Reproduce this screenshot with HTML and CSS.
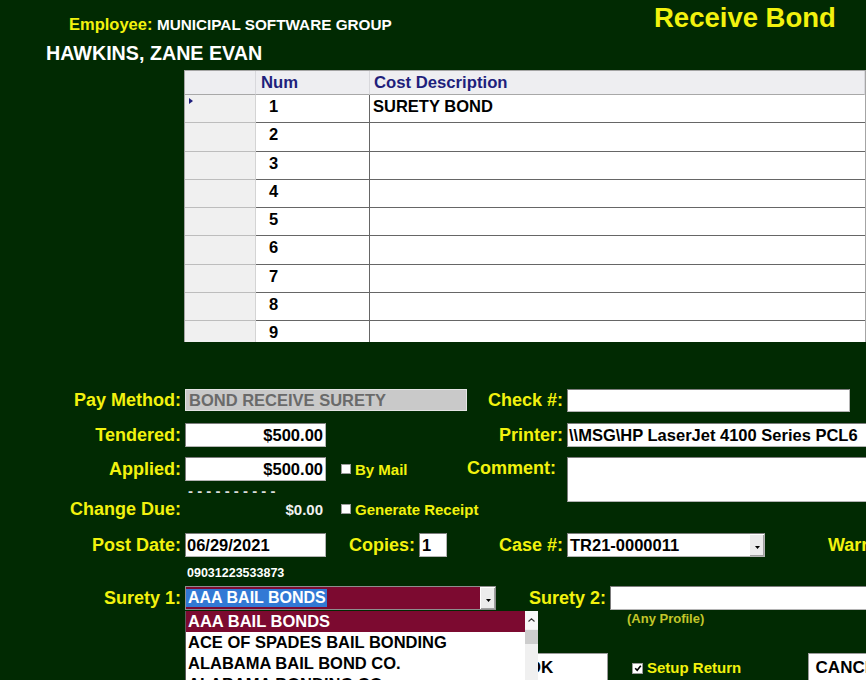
FILE: index.html
```html
<!DOCTYPE html>
<html>
<head>
<meta charset="utf-8">
<title>Receive Bond</title>
<link rel="stylesheet" href="styles.css">
</head>
<body>
<div class="screen">
  <header class="top">
    <div class="who">
      <div class="emp"><span class="emp-label">Employee:</span> <span class="emp-name">MUNICIPAL SOFTWARE GROUP</span></div>
      <div class="person">HAWKINS, ZANE EVAN</div>
    </div>
    <h1 class="title">Receive Bond</h1>
  </header>

  <div class="costs">
    <div class="hd sel"></div>
    <div class="hd num">Num</div>
    <div class="hd desc">Cost Description</div>

    <div class="sel"><span class="cur"></span></div><div class="num">1</div><div class="desc">SURETY BOND</div>
    <div class="sel"></div><div class="num">2</div><div class="desc"></div>
    <div class="sel"></div><div class="num">3</div><div class="desc"></div>
    <div class="sel"></div><div class="num">4</div><div class="desc"></div>
    <div class="sel"></div><div class="num">5</div><div class="desc"></div>
    <div class="sel"></div><div class="num">6</div><div class="desc"></div>
    <div class="sel"></div><div class="num">7</div><div class="desc"></div>
    <div class="sel"></div><div class="num">8</div><div class="desc"></div>
    <div class="sel"></div><div class="num">9</div><div class="desc"></div>
  </div>

  <div class="pay">
    <div class="row ra">
      <span class="lbl c1">Pay Method:</span>
      <div class="box method">BOND RECEIVE SURETY</div>
      <span class="lbl c4">Check #:</span>
      <div class="box checkno"></div>
    </div>

    <div class="row rb">
      <span class="lbl c1">Tendered:</span>
      <div class="box money">$500.00</div>
      <span class="spacer"></span>
      <span class="lbl c4">Printer:</span>
      <div class="box printer">\\MSG\HP LaserJet 4100 Series PCL6</div>
    </div>

    <div class="rc">
      <div class="rc-left">
        <div class="row applied">
          <span class="lbl c1">Applied:</span>
          <div class="box money">$500.00</div>
          <span class="opt"><span class="chk"></span>By Mail</span>
        </div>
        <div class="dashes">- - - - - - - - - -</div>
        <div class="row change">
          <span class="lbl c1">Change Due:</span>
          <span class="due">$0.00</span>
          <span class="opt"><span class="chk"></span>Generate Receipt</span>
        </div>
      </div>
      <div class="rc-right">
        <span class="lbl c4 top">Comment:</span>
        <div class="box comment"></div>
      </div>
    </div>

    <div class="row rd">
      <span class="lbl c1">Post Date:</span>
      <div class="box date">06/29/2021</div>
      <span class="lbl copies">Copies:</span>
      <div class="box copies-box">1</div>
      <span class="lbl case">Case #:</span>
      <div class="box combo-case">TR21-0000011<span class="drop"><svg width="5" height="3" viewBox="0 0 5 3"><path d="M0 0h5L2.5 3z" fill="#000"/></svg></span></div>
      <span class="lbl warrant">Warrant #:</span>
    </div>

    <div class="barcode">09031223533873</div>

    <div class="row re">
      <span class="lbl c1">Surety 1:</span>
      <div class="combo-surety">
        <span class="picked">AAA BAIL BONDS</span>
        <span class="drop"><svg width="5" height="3" viewBox="0 0 5 3"><path d="M0 0h5L2.5 3z" fill="#000"/></svg></span>
        <div class="list">
          <div class="items">
            <div class="item hi">AAA BAIL BONDS</div>
            <div class="item">ACE OF SPADES BAIL BONDING</div>
            <div class="item">ALABAMA BAIL BOND CO.</div>
            <div class="item">ALABAMA BONDING CO.</div>
          </div>
          <div class="scroll">
            <div class="up"><svg width="7" height="4" viewBox="0 0 7 4"><path d="M0.5 3.5L3.5 0.8L6.5 3.5" stroke="#333" stroke-width="1.1" fill="none"/></svg></div>
            <div class="thumb"></div>
          </div>
        </div>
      </div>
      <span class="lbl s2">Surety 2:</span>
      <div class="box surety2"></div>
    </div>

    <div class="profile">(Any Profile)</div>

    <div class="row rf">
      <button class="btn ok">OK</button>
      <span class="opt setup"><span class="chk on"><svg width="8" height="8" viewBox="0 0 8 8"><path d="M1.2 4.2L3.2 6.2L6.8 1.8" stroke="#000" stroke-width="1.6" fill="none"/></svg></span>Setup Return</span>
      <button class="btn cancel">CANCEL</button>
    </div>
  </div>
</div>
</body>
</html>
```

FILE: styles.css
```css
html, body {
  margin: 0;
  padding: 0;
}
body {
  background: #012a02;
  font-family: "Liberation Sans", Arial, sans-serif;
  font-weight: bold;
  width: 866px;
  height: 680px;
  overflow: hidden;
}
.screen {
  width: 866px;
  height: 680px;
  overflow: hidden;
  position: relative;
}

/* header */
.top {
  display: flex;
  height: 70px;
}
.who {
  width: 654px;
  flex: none;
  padding-top: 14px;
  box-sizing: border-box;
}
.emp {
  padding-left: 69px;
  height: 20px;
  line-height: 20px;
  white-space: nowrap;
}
.emp-label {
  color: #f2f20e;
  font-size: 16.5px;
}
.emp-name {
  color: #fff;
  font-size: 15.3px;
}
.person {
  padding-left: 46px;
  margin-top: 7px;
  color: #fff;
  font-size: 19.7px;
  line-height: 24px;
  white-space: nowrap;
}
.title {
  margin: 0;
  padding-top: 3px;
  font-size: 27.5px;
  line-height: 30px;
  color: #f2f20e;
  font-weight: bold;
  white-space: nowrap;
}

/* cost grid */
.costs {
  margin-left: 184px;
  width: 682px;
  height: 272px;
  box-sizing: border-box;
  border: 1px solid #a4a4a4;
  border-bottom: none;
  background: #fff;
  display: grid;
  grid-template-columns: 71px 114px 1fr;
  grid-template-rows: 24px repeat(9, 28.25px);
  overflow: hidden;
  font-size: 16.5px;
  color: #000;
}
.costs > div {
  box-sizing: border-box;
  white-space: nowrap;
}
.costs .sel {
  background: #f0f0f0;
  border-right: 1px solid #d4d4d4;
  border-bottom: 1px solid #bdbdbd;
  position: relative;
}
.costs .num {
  border-right: 1px solid #666;
  border-bottom: 1px solid #666;
  padding: 1px 0 0 13px;
  line-height: 20px;
}
.costs .desc {
  border-bottom: 1px solid #666;
  padding: 1px 0 0 3px;
  line-height: 20px;
}
.costs .hd {
  background: #eeeef1;
  border-right: 1px solid #d8d8dc;
  border-bottom: 1px solid #a8a8a8;
  color: #1f1f7c;
  line-height: 23px;
  padding: 0;
  font-size: 16.7px;
}
.costs .hd.num { padding-left: 5px; }
.costs .hd.desc { padding-left: 4px; }
.cur {
  position: absolute;
  left: 4px;
  top: 3px;
  width: 0;
  height: 0;
  border-left: 4px solid #1f1f7c;
  border-top: 3px solid transparent;
  border-bottom: 3px solid transparent;
}

/* form */
.pay {
  margin-top: 47px;
}
.row {
  display: flex;
  align-items: center;
  white-space: nowrap;
}
.lbl {
  color: #f2f20e;
  font-size: 18px;
  line-height: 22px;
  white-space: nowrap;
  flex: none;
}
.c1 {
  width: 181px;
  text-align: right;
  margin-right: 4px;
}
.c4 {
  width: 96px;
  text-align: right;
  margin-right: 4px;
}
.box {
  box-sizing: border-box;
  background: #fff;
  border: 1px solid #b4b4b4;
  border-top-color: #7c7c7c;
  border-left-color: #7c7c7c;
  font-size: 16.5px;
  color: #000;
  white-space: nowrap;
  overflow: hidden;
  display: flex;
  align-items: center;
  padding: 0 2px;
  flex: none;
  height: 100%;
}

.ra { height: 22px; }
.method {
  width: 282px;
  background: #c9c9c9;
  color: #6a6a6a;
  border-color: #e4e4e4;
  padding-left: 3px;
}
.checkno { width: 283px; height: 23px; align-self: flex-start; }

.rb { height: 24px; margin-top: 12px; }
.money {
  width: 141px;
  justify-content: flex-end;
}
.spacer { width: 141px; flex: none; }
.printer { width: 310px; padding-left: 1px; border-right: none; }

.rc {
  display: flex;
  margin-top: 10px;
  height: 63px;
}
.rc-left {
  width: 467px;
  flex: none;
}
.rc-right {
  display: flex;
  align-items: flex-start;
}
.applied { height: 24px; }
.opt {
  display: flex;
  align-items: center;
  gap: 4px;
  color: #f2f20e;
  font-size: 15px;
  margin-left: 15px;
}
.chk {
  width: 10px;
  height: 10px;
  box-sizing: border-box;
  background: #fff;
  border: 1px solid #9a9a9a;
  flex: none;
  display: flex;
  align-items: center;
  justify-content: center;
}
.dashes {
  margin-top: 3px;
  height: 14px;
  line-height: 14px;
  padding-left: 188px;
  color: #dcdcdc;
  font-size: 15px;
  white-space: pre;
}
.change { height: 22px; }
.due {
  width: 141px;
  box-sizing: border-box;
  text-align: right;
  padding-right: 3px;
  color: #f0f0f0;
  font-size: 15px;
  flex: none;
}
.comment { width: 300px; height: 45px; border-right: none; }

.rd { height: 24px; margin-top: 13px; }
.date { width: 141px; padding-left: 1px; }
.lbl.copies { margin-left: 23px; width: 66px; margin-right: 4px; }
.copies-box { width: 28px; padding-left: 2px; }
.lbl.case { width: 116px; text-align: right; margin-right: 4px; }
.combo-case {
  width: 198px;
  position: relative;
}
.drop {
  display: flex;
  align-items: center;
  justify-content: center;
  background: #ececec;
  border-left: 1px solid #fff;
  border-top: 1px solid #fff;
  box-shadow: inset -1px -1px 0 #a0a0a0;
  width: 15px;
  height: 100%;
  box-sizing: border-box;
  margin-left: auto;
  padding-top: 4px;
  flex: none;
}
.combo-case .drop { margin-right: -2px; }
.lbl.warrant { margin-left: 63px; }

.barcode {
  margin-top: 8px;
  height: 16px;
  line-height: 16px;
  padding-left: 187px;
  color: #fff;
  font-size: 12.5px;
}

.re { height: 24px; margin-top: 5px; }
.combo-surety {
  position: relative;
  width: 311px;
  height: 24px;
  box-sizing: border-box;
  background: #7c0a30;
  border: 1px solid #8e8e8e;
  display: flex;
  align-items: center;
  flex: none;
  z-index: 2;
}
.picked {
  background: #3279d5;
  color: #fff;
  font-size: 16px;
  height: 18px;
  line-height: 18px;
  padding: 0 1px 0 2px;
}
.combo-surety > .drop { height: 22px; }
.list {
  position: absolute;
  left: -1px;
  top: 24px;
  width: 353px;
  height: 80px;
  background: #fff;
  border-left: 1px solid #5a5a5a;
  display: flex;
  box-sizing: border-box;
}
.items {
  width: 339px;
  flex: none;
}
.item {
  height: 21px;
  line-height: 21px;
  padding-left: 2px;
  font-size: 16.5px;
  color: #000;
  white-space: nowrap;
  overflow: hidden;
}
.item.hi {
  background: #7c0a30;
  color: #fff;
}
.scroll {
  width: 13px;
  flex: none;
  background: #f0f0f0;
  display: flex;
  flex-direction: column;
  align-items: center;
}
.up {
  height: 18px;
  width: 13px;
  background: #f7f7f7;
  display: flex;
  align-items: center;
  justify-content: center;
}
.thumb {
  margin-top: 1px;
  width: 13px;
  height: 14px;
  background: #cdcdcd;
}
.lbl.s2 { width: 110px; text-align: right; margin-right: 4px; }
.surety2 { width: 270px; border-right: none; }

.profile {
  margin-top: 1px;
  height: 16px;
  line-height: 16px;
  padding-left: 627px;
  color: #c2c62a;
  font-size: 13px;
}

.rf {
  margin-top: 26px;
  height: 36px;
  align-items: flex-start;
}
.btn {
  box-sizing: border-box;
  height: 36px;
  background: #fff;
  border: 1px solid #9a9a9a;
  font-family: "Liberation Sans", Arial, sans-serif;
  font-weight: bold;
  font-size: 17px;
  line-height: 20px;
  color: #000;
  padding: 0 0 7px;
  text-align: center;
  flex: none;
}
.btn.ok { margin-left: 473px; width: 135px; }
.opt.setup {
  width: 200px;
  flex: none;
  box-sizing: border-box;
  margin-left: 0;
  padding-left: 24px;
  padding-top: 5px;
  line-height: 20px;
  gap: 4px;
}
.chk.on { width: 11px; height: 11px; }
.btn.cancel { width: 86px; }
```
